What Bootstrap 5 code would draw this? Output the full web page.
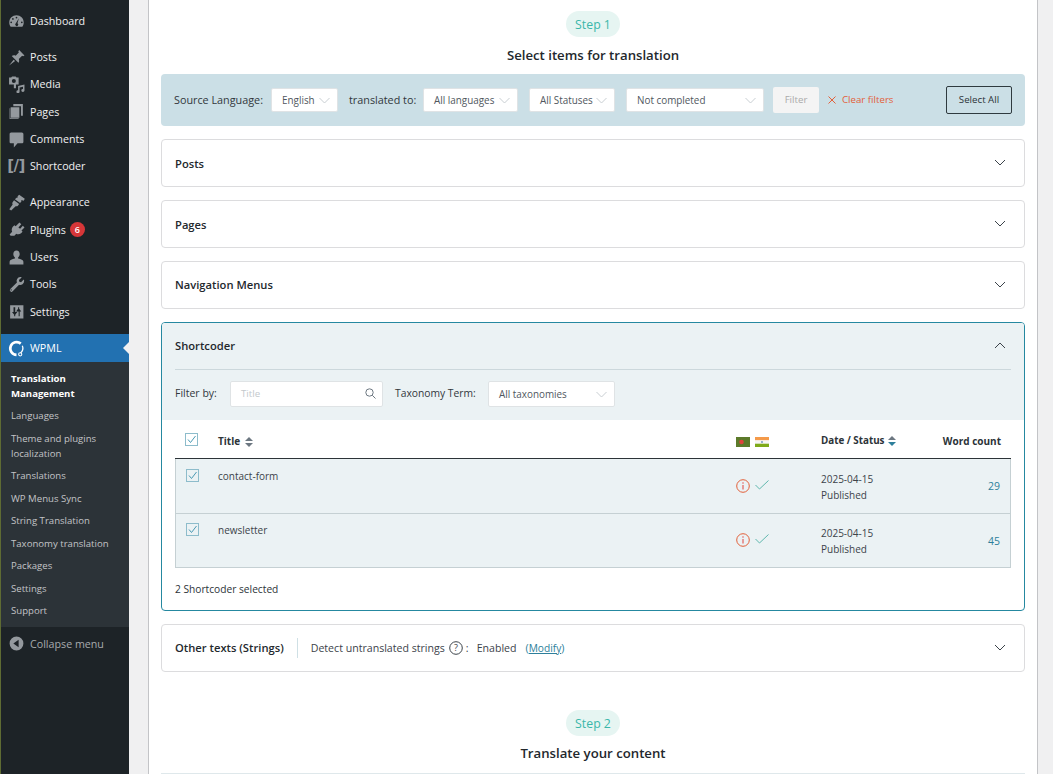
<!DOCTYPE html>
<html lang="en"><head><meta charset="utf-8"><title>WPML</title>
<link href="https://cdn.jsdelivr.net/npm/bootstrap@5.3.0/dist/css/bootstrap.min.css" rel="stylesheet">
<style>
html,body{height:774px;overflow:hidden}
body{font-family:"Open Sans","Noto Sans",sans-serif;font-size:11px;color:#2c3338;background:#f0f0f1}
.shell{height:774px}
.wpside{width:129px;flex:none;background:#1d2327;border-left:1px solid #5e6b33;padding-top:7.5px;color:#f0f0f1;height:774px}
.wprow{height:27.33px;font-size:10.7px;position:relative}
.wprow .ico{width:29px;flex:none;display:flex;justify-content:center;padding-left:1px}
.wprow svg{width:17px;height:17px;fill:#94999e}
.wpsep{height:8.7px}
.sc{font-family:"DejaVu Sans",sans-serif;font-size:15px;font-weight:700;color:#94999e;letter-spacing:-.6px;line-height:1}
.plugcount{width:15px;height:15px;border-radius:50%;background:#d63638;color:#fff;font-size:9px;line-height:15px;text-align:center;margin-left:4px;font-weight:600}
.wpcur{height:28px;background:#2271b1;color:#fff}
.wpcur svg{fill:none}
.wpcur::after{content:"";position:absolute;right:0;top:8px;border:6px solid transparent;border-right-color:#f0f0f1;border-left:0}
.wpsub{background:#2c3338;padding:4.8px 6px 5.4px 10px;font-size:9.6px;color:#c3c4c7}
.wpsub div{line-height:15px;padding:3.75px 0}
.wpsub .on{color:#fff;font-weight:700}
.wpcoll{color:#a7aaad;height:27.33px;margin-top:2.6px}
.wpmain{flex:1;min-width:0;padding-left:19px;padding-right:15px}
.panel{height:774px;background:#fff;border-left:1px solid #c3c4c7;border-right:1px solid #c3c4c7;padding:11px 12px 0}
.stepchip{height:26px;border-radius:13px;background:#e6f5f2;color:#3ab7aa;font-size:12.3px;line-height:28px;padding:0 8px;width:54px;text-align:center;white-space:nowrap}
.stepttl{font-size:13.2px;font-weight:600;color:#23282d;line-height:18px;margin-top:9px;margin-bottom:10px}
.fbar{height:52px;background:#cbdfe6;border-radius:4px;padding:0 13px;font-size:10.8px;margin-bottom:13px}
.lab{white-space:nowrap;color:#32373c}
.fsel{height:24px;background:#fff;border:1px solid #dfe3e5;border-radius:2px;font-size:9.9px;color:#50575e;padding:0 7px 0 10px;white-space:nowrap}
.fsel svg,.rowchev{flex:none}
.rowchev{margin-right:5px;margin-top:-2px}
.w66{width:67px}.w94{width:95px}.w86{width:86px}.w136{width:138px}.w127{width:127px}
.fbtn{width:46px;height:26px;background:#f4f4f4;border-radius:2px;color:#aaa;font-size:9.7px;line-height:26px;text-align:center}
.clr{color:#e2603a;font-size:9.7px;white-space:nowrap}
.selall{width:66px;height:28px;border:1px solid #2f3a3f;border-radius:2px;font-size:9.7px;color:#2c3338;line-height:26px;text-align:center;padding:0;background:transparent}
.acc{height:48px;border:1px solid #dcdcde;border-radius:4px;padding:0 13px;margin-bottom:13px;background:#fff}
.acct{font-size:11.2px;font-weight:600;color:#23282d;white-space:nowrap}
.nudge{padding-top:2px}
.openc{height:289px;border:1px solid #2588a0;border-radius:4px;margin-bottom:13px;overflow:hidden}
.ohead{background:#ebf2f4;height:97px;padding:0 13px}
.ohead1{height:47px;border-bottom:1px solid #ccd8dc}
.ohead2{padding-top:11px;height:50px}
.inp{width:153px;height:26px;background:#fff;border:1px solid #dfe3e5;border-radius:2px;padding:0 6px 0 10px;color:#c3c8cc;font-size:9.7px;margin-left:13px}
.filt2{height:26px}
.tbwrap{padding:0 13px}
.tbl{width:836px;table-layout:fixed;border-collapse:separate;border-spacing:0;margin:0}
.tbl th{height:39px;border-bottom:1px solid #2c3338;font-size:10px;font-weight:700;color:#2c3338;padding:4px 0 0;vertical-align:middle}
.tbl th.thc{padding-top:1px}
.tbl th.thf{padding-top:6px}
.tbl td{height:54px;background:#ebf2f4;border-bottom:1px solid #c5d0d3;font-size:10px;padding:0;vertical-align:top;color:#3c434a}
.tbl tr:first-child td{height:55px}
.tbl td:first-child{border-left:1px solid #c5d0d3}
.tbl td:last-child{border-right:1px solid #c5d0d3}
.cbx{width:13px;height:13px;display:block;margin:9px 0 0 10px}
th .cbx{margin-top:0}
.ttx{display:block;padding-top:9px;line-height:15px}
.dtx{line-height:16px;padding-top:11px}
.stico{padding-top:19px;gap:5px}
.chk{margin-top:1px}
.tbl tr:first-child .cbx{margin-top:10px}
.tbl tr:first-child .ttx{padding-top:10px}
.tbl tr:first-child .dtx{padding-top:12px}
.tbl tr:first-child .stico{padding-top:20px}
.tbl thead tr:first-child .cbx{margin-top:0}
.tbl td.wc{color:#2d7f9b;font-size:10.5px;text-align:right;padding:19px 10px 0 0;line-height:16px}
.flagset{gap:5px}
.selc{font-size:10.2px;padding:0;margin-top:13px;line-height:16px;color:#2c3338}
.oth .vsep{width:1px;height:20px;background:#cfe0e5;margin:0 13px}
.oth .txt{font-size:10.6px;white-space:nowrap;color:#3c434a;padding-top:1px}
.modi{color:#2d7f9b;text-decoration:underline;font-size:10.2px}
.qmark{margin-left:4px;margin-right:3px}
.gr2{margin-top:38px}
.t2{margin-top:8px;margin-bottom:0}
.endline{height:1px;background:#dfe8eb;margin-top:11px}
</style></head>
<body>
<div class="shell d-flex">
<nav class="wpside">
 <div class="wprow d-flex align-items-center"><span class="ico"><svg viewBox="0 0 16 16"><path fill-rule="evenodd" d="M8 2.200C4.300 2.200 1.200 5 1.200 9c0 1.600.4 2.800 1.300 3.900h11c.9-1.100 1.300-2.300 1.300-3.900 0-4-3.100-6.800-6.800-6.800zM8 3.500a.8.800 0 1 1 0 1.600.8.800 0 0 1 0-1.600zM4.600 4.800a.8.800 0 1 1 0 1.600.8.800 0 0 1 0-1.600zM3 8a.8.800 0 1 1 0 1.600A.8.800 0 0 1 3 8zM13 8a.8.800 0 1 1 0 1.600.8.800 0 0 1 0-1.600zM10.300 5 8.900 9.600a1.400 1.400 0 1 1-1.500.1z"/></svg></span>Dashboard</div>
 <div class="wpsep"></div>
 <div class="wprow d-flex align-items-center"><span class="ico"><svg viewBox="0 0 16 16"><path d="M10.500 1 15.500 6l-1.300.8-.9-.5-3.100 3c.6 1.500.3 2.800-.4 3.700L3.500 6.700c1-.7 2.200-1 3.700-.4l3-3.100-.5-.9zM5.300 10 1 15.500l5.700-4.200z"/></svg></span>Posts</div>
 <div class="wprow d-flex align-items-center"><span class="ico"><svg viewBox="0 0 16 16"><path fill-rule="evenodd" d="M1 1.500h2l.8-1h3.400l.8 1H10v6.500H7.500v3.500H5.500V8H1zM5.500 2.800a1.900 1.900 0 1 0 0 3.800 1.900 1.900 0 0 0 0-3.800zM9.500 9.500l6-1.500v5.700a1.500 1.400 0 1 1-1.400-1.400V10l-3.200.8v4a1.500 1.400 0 1 1-1.400-1.400z"/></svg></span>Media</div>
 <div class="wprow d-flex align-items-center"><span class="ico"><svg viewBox="0 0 16 16"><path d="M5 1h9v11h-1.800V3H5zM2.500 4h8.200v9.800H2.500z"/><path d="M1.500 5v10h8.500v-.6H2.100V5z"/></svg></span>Pages</div>
 <div class="wprow d-flex align-items-center"><span class="ico"><svg viewBox="0 0 16 16"><path d="M3 1.500h10c1 0 1.500.7 1.500 1.500v7c0 .9-.6 1.500-1.500 1.500H9L5.500 15.500v-4H3c-1 0-1.500-.6-1.500-1.500V3c0-.8.5-1.500 1.500-1.500z"/></svg></span>Comments</div>
 <div class="wprow d-flex align-items-center"><span class="ico"><span class="sc">[/]</span></span>Shortcoder</div>
 <div class="wpsep"></div>
 <div class="wprow d-flex align-items-center"><span class="ico"><svg viewBox="0 0 16 16"><path d="M10.500.8 15.800 4.500l-1 1.800-2.300-.6.200 1.200-1.300 1.600L6.500 5l1.500-1.500 1.200-.1-.2-1.200zM5.700 5.900l4.800 3.500-1 1.400c-.6.800-1.500 1-2.300.7L3 15.500l-1.800-1.200 3.200-4.400c-.5-.8-.4-1.700.1-2.400z"/></svg></span>Appearance</div>
 <div class="wprow d-flex align-items-center"><span class="ico"><svg viewBox="0 0 16 16"><path d="M10.800 1.500 12.500 3 9.800 6l1.600 1.400L14 4.500l1.500 1.500-2.800 3 1 1-1.400 1.500c-1.500 1-3.200 1.200-4.500.4l-1.800 2H2.500l-1-1.300 2.400-2.600c-.7-1.400-.5-3 .6-4.500L6 4l1.200 1z"/></svg></span>Plugins<span class="plugcount">6</span></div>
 <div class="wprow d-flex align-items-center"><span class="ico"><svg viewBox="0 0 16 16"><path d="M8 1.500c1.900 0 3 1.500 3 3.300 0 1.300-.6 2.500-1.500 3.200v1c2.700.5 5 1.400 5 3.100v2.400h-13V12c0-1.700 2.300-2.600 5-3.100V8C5.600 7.300 5 6.100 5 4.800 5 3 6.100 1.500 8 1.500z"/></svg></span>Users</div>
 <div class="wprow d-flex align-items-center"><span class="ico"><svg viewBox="0 0 16 16"><path fill-rule="evenodd" d="M11.500 1c.6 0 1 .1 1.400.3L10.300 3.800l.4 1.600 1.600.4 2.500-2.600c.3.500.4 1 .4 1.500a3.700 3.700 0 0 1-4.800 3.500l-6 6.200a1.500 1.500 0 0 1-2.200-2.200l6.200-6A3.700 3.700 0 0 1 11.500 1zM3 12.500a.6.600 0 1 0 0 1.200.6.600 0 0 0 0-1.200z"/></svg></span>Tools</div>
 <div class="wprow d-flex align-items-center"><span class="ico"><svg viewBox="0 0 16 16"><path fill-rule="evenodd" d="M2 2h12.500v12.500H2zM5.200 4v4.500H3.800L5.800 11v1.500h1V11l2-2.500H6.800V4zM11 12.500V8h1.500l-2-2.700V4h-1v1.300L7.600 8H10v4.500z"/></svg></span>Settings</div>
 <div class="wpsep"></div>
 <div class="wprow wpcur d-flex align-items-center"><span class="ico"><svg viewBox="0 0 16 16"><path d="M12 3.400A6 6 0 1 0 8 14" fill="none" stroke="#fff" stroke-width="2.500"/><path d="M13.500 5.500A6 6 0 0 1 11.800 12.300" fill="none" stroke="#fff" stroke-width="1.200"/><circle cx="11.500" cy="13.500" r="1.500" fill="none" stroke="#fff"/></svg></span>WPML</div>
 <div class="wpsub">
  <div class="on">Translation Management</div><div>Languages</div><div>Theme and plugins localization</div><div>Translations</div><div>WP Menus Sync</div><div>String Translation</div><div>Taxonomy translation</div><div>Packages</div><div>Settings</div><div>Support</div>
 </div>
 <div class="wprow wpcoll d-flex align-items-center"><span class="ico"><svg viewBox="0 0 16 16"><path fill-rule="evenodd" d="M8 1.500a6.500 6.500 0 1 1 0 13 6.500 6.500 0 0 1 0-13zM10 4.500 5 8l5 3.500z"/></svg></span>Collapse menu</div>
</nav>
<main class="wpmain">
<div class="panel">
 <div class="d-flex justify-content-center"><span class="stepchip">Step 1</span></div>
 <div class="stepttl text-center">Select items for translation</div>
 <div class="fbar d-flex align-items-center">
  <span class="lab" style="width:97px">Source Language:</span>
  <span class="fsel w66 d-flex align-items-center justify-content-between">English<svg width="11" height="7" viewBox="0 0 11 7"><path d="M.5 1l5 5 5-5" fill="none" stroke="#c8ced2"/></svg></span>
  <span class="lab" style="width:74px;margin-left:11px">translated to:</span>
  <span class="fsel w94 d-flex align-items-center justify-content-between">All languages<svg width="11" height="7" viewBox="0 0 11 7"><path d="M.5 1l5 5 5-5" fill="none" stroke="#c8ced2"/></svg></span>
  <span class="fsel w86 d-flex align-items-center justify-content-between" style="margin-left:11px">All Statuses<svg width="11" height="7" viewBox="0 0 11 7"><path d="M.5 1l5 5 5-5" fill="none" stroke="#c8ced2"/></svg></span>
  <span class="fsel w136 d-flex align-items-center justify-content-between" style="margin-left:11px">Not completed<svg width="11" height="7" viewBox="0 0 11 7"><path d="M.5 1l5 5 5-5" fill="none" stroke="#c8ced2"/></svg></span>
  <span class="fbtn" style="margin-left:9px">Filter</span>
  <span class="clr d-flex align-items-center" style="margin-left:9px"><svg width="8" height="8" viewBox="0 0 8 8" style="margin-right:6px"><path d="M.5.5l7 7m0-7l-7 7" stroke="#e2603a" fill="none"/></svg>Clear filters</span>
  <button class="selall ms-auto" type="button">Select All</button>
 </div>
 <div class="acc d-flex align-items-center justify-content-between"><span class="acct nudge">Posts</span><svg class="rowchev" width="12" height="7" viewBox="0 0 12 7"><path d="M1 1l5 5 5-5" fill="none" stroke="#3c434a"/></svg></div>
 <div class="acc d-flex align-items-center justify-content-between"><span class="acct nudge">Pages</span><svg class="rowchev" width="12" height="7" viewBox="0 0 12 7"><path d="M1 1l5 5 5-5" fill="none" stroke="#3c434a"/></svg></div>
 <div class="acc d-flex align-items-center justify-content-between"><span class="acct">Navigation Menus</span><svg class="rowchev" width="12" height="7" viewBox="0 0 12 7"><path d="M1 1l5 5 5-5" fill="none" stroke="#3c434a"/></svg></div>
 <div class="openc">
  <div class="ohead">
   <div class="ohead1 d-flex align-items-center justify-content-between"><span class="acct">Shortcoder</span><svg class="rowchev" width="12" height="7" viewBox="0 0 12 7"><path d="M1 6l5-5 5 5" fill="none" stroke="#3c434a"/></svg></div>
   <div class="ohead2 d-flex align-items-start">
    <span class="lab filt2 d-flex align-items-center" style="width:42px;font-size:10.5px">Filter by:</span>
    <span class="inp d-flex align-items-center justify-content-between">Title<svg width="11" height="11" viewBox="0 0 11 11" style="margin-top:-2px"><circle cx="4.500" cy="4.500" r="3.700" fill="none" stroke="#6c7781"/><path d="M7.300 7.300l3.200 3.200" stroke="#6c7781"/></svg></span>
    <span class="lab filt2 d-flex align-items-center" style="width:93px;margin-left:12px;font-size:10.3px">Taxonomy Term:</span>
    <span class="fsel w127 d-flex align-items-center justify-content-between filt2">All taxonomies<svg width="11" height="7" viewBox="0 0 11 7"><path d="M.5 1l5 5 5-5" fill="none" stroke="#c8ced2"/></svg></span>
   </div>
  </div>
  <div class="tbwrap">
   <table class="tbl">
    <colgroup><col style="width:43px"><col style="width:518px"><col style="width:85px"><col style="width:108px"><col></colgroup>
    <thead><tr>
     <th class="thc"><svg class="cbx" viewBox="0 0 13 13"><rect x=".5" y=".5" width="12" height="12" fill="#fff" stroke="#8dbccb"/><path d="M3 6.500l2.500 3L10.500 3" fill="none" stroke="#4b9ab4"/></svg></th>
     <th>Title <svg width="8" height="10" viewBox="0 0 8 10" style="margin-left:2px"><path d="M4 0l4 4H0zM0 6h8l-4 4z" fill="#6c7781"/></svg></th>
     <th class="thf"><span class="d-flex flagset">
      <svg width="14" height="10" viewBox="0 0 14 10"><rect width="14" height="10" fill="#5c7a2a"/><circle cx="5.500" cy="5" r="2.300" fill="#e0423c"/></svg>
      <svg width="14" height="10" viewBox="0 0 14 10"><rect width="14" height="3.400" fill="#f49a4a"/><rect y="3.400" width="14" height="3.300" fill="#f5f5f5"/><rect y="6.700" width="14" height="3.300" fill="#7faa1a"/><circle cx="7" cy="5" r="1.100" fill="#7f9fc0"/></svg></span></th>
     <th style="font-size:9.8px">Date / Status <svg width="8" height="10" viewBox="0 0 8 10" style="margin-left:1px"><path d="M4 0l4 4H0z" fill="#6c7781"/><path d="M0 6h8l-4 4z" fill="#2d7f9b"/></svg></th>
     <th class="text-end" style="padding-right:10px">Word count</th>
    </tr></thead>
    <tbody>
    <tr><td><svg class="cbx" viewBox="0 0 13 13"><rect x=".5" y=".5" width="12" height="12" fill="#ebf2f4" stroke="#8dbccb"/><path d="M3 6.500l2.500 3L10.500 3" fill="none" stroke="#4b9ab4"/></svg></td><td><span class="ttx">contact-form</span></td>
     <td><div class="d-flex stico"><svg width="14" height="14" viewBox="0 0 14 14"><circle cx="7" cy="7" r="6.300" fill="none" stroke="#e2603a"/><path d="M7 6v4.500" stroke="#e0423c"/><circle cx="7" cy="4" r=".7" fill="#e0423c"/></svg><svg class="chk" width="14" height="10" viewBox="0 0 14 10"><path d="M.5 5l4 4L13.500.5" fill="none" stroke="#5fb7ad"/></svg></div></td>
     <td><div class="dtx">2025-04-15<br>Published</div></td><td class="wc">29</td></tr>
    <tr><td><svg class="cbx" viewBox="0 0 13 13"><rect x=".5" y=".5" width="12" height="12" fill="#ebf2f4" stroke="#8dbccb"/><path d="M3 6.500l2.500 3L10.500 3" fill="none" stroke="#4b9ab4"/></svg></td><td><span class="ttx">newsletter</span></td>
     <td><div class="d-flex stico"><svg width="14" height="14" viewBox="0 0 14 14"><circle cx="7" cy="7" r="6.300" fill="none" stroke="#e2603a"/><path d="M7 6v4.500" stroke="#e0423c"/><circle cx="7" cy="4" r=".7" fill="#e0423c"/></svg><svg class="chk" width="14" height="10" viewBox="0 0 14 10"><path d="M.5 5l4 4L13.500.5" fill="none" stroke="#5fb7ad"/></svg></div></td>
     <td><div class="dtx">2025-04-15<br>Published</div></td><td class="wc">45</td></tr>
    </tbody>
   </table>
   <div class="selc">2 Shortcoder selected</div>
  </div>
 </div>
 <div class="acc oth d-flex align-items-center">
  <span class="acct">Other texts (Strings)</span><span class="vsep"></span>
  <span class="txt">Detect untranslated strings</span>
  <svg class="qmark" width="14" height="14" viewBox="0 0 14 14"><circle cx="7" cy="7" r="6.300" fill="none" stroke="#3c434a"/><text x="7" y="10.200" font-size="9" text-anchor="middle" fill="#3c434a" font-family="Open Sans">?</text></svg>
  <span class="txt">:</span><span class="txt" style="margin-left:8px">Enabled</span>
  <span class="txt" style="margin-left:9px;color:#2d7f9b">(<span class="modi">Modify</span>)</span>
  <svg class="rowchev ms-auto" width="12" height="7" viewBox="0 0 12 7"><path d="M1 1l5 5 5-5" fill="none" stroke="#3c434a"/></svg>
 </div>
 <div class="d-flex justify-content-center gr2"><span class="stepchip">Step 2</span></div>
 <div class="stepttl text-center t2">Translate your content</div>
 <div class="endline"></div>
</div>
</main>
</div>
<script src="https://cdn.jsdelivr.net/npm/bootstrap@5.3.0/dist/js/bootstrap.bundle.min.js"></script>
</body></html>
